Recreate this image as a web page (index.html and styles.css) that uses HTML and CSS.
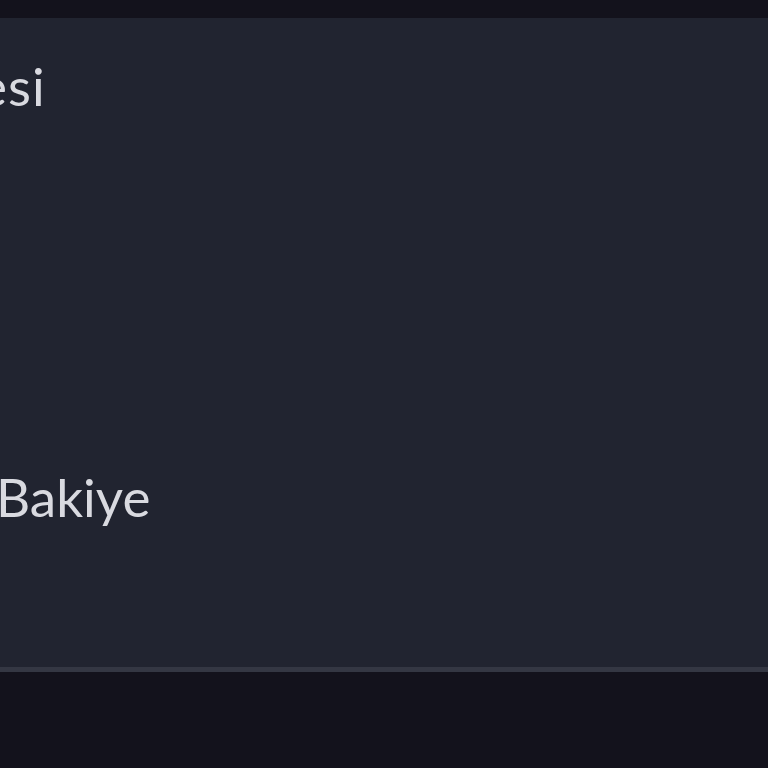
FILE: index.html
```html
<!DOCTYPE html>
<html lang="tr">
<head>
<meta charset="utf-8">
<link rel="stylesheet" href="styles.css">
</head>
<body>
<div class="topbar"></div>
<section class="panel">
  <div class="title">esi</div>
  <div class="label">Bakiye</div>
</section>
<div class="footer"></div>
</body>
</html>
```
FILE: styles.css
```css
html, body {
  margin: 0;
  padding: 0;
  width: 768px;
  height: 768px;
  overflow: hidden;
  background: #13121c;
  font-family: Lato, "Noto Sans", sans-serif;
}
.topbar {
  height: 18px;
  background: #13121c;
}
.panel {
  box-sizing: border-box;
  height: 654px;
  background: #212430;
  border-bottom: 5px solid #343743;
  padding-top: 42px;
  overflow: hidden;
}
.title, .label {
  font-size: 53px;
  line-height: 52px;
  color: #d9dae0;
  white-space: nowrap;
}
.title {
  margin-left: -21px;
  letter-spacing: 1px;
}
.label {
  margin-top: 359px;
  margin-left: -4px;
}
```
